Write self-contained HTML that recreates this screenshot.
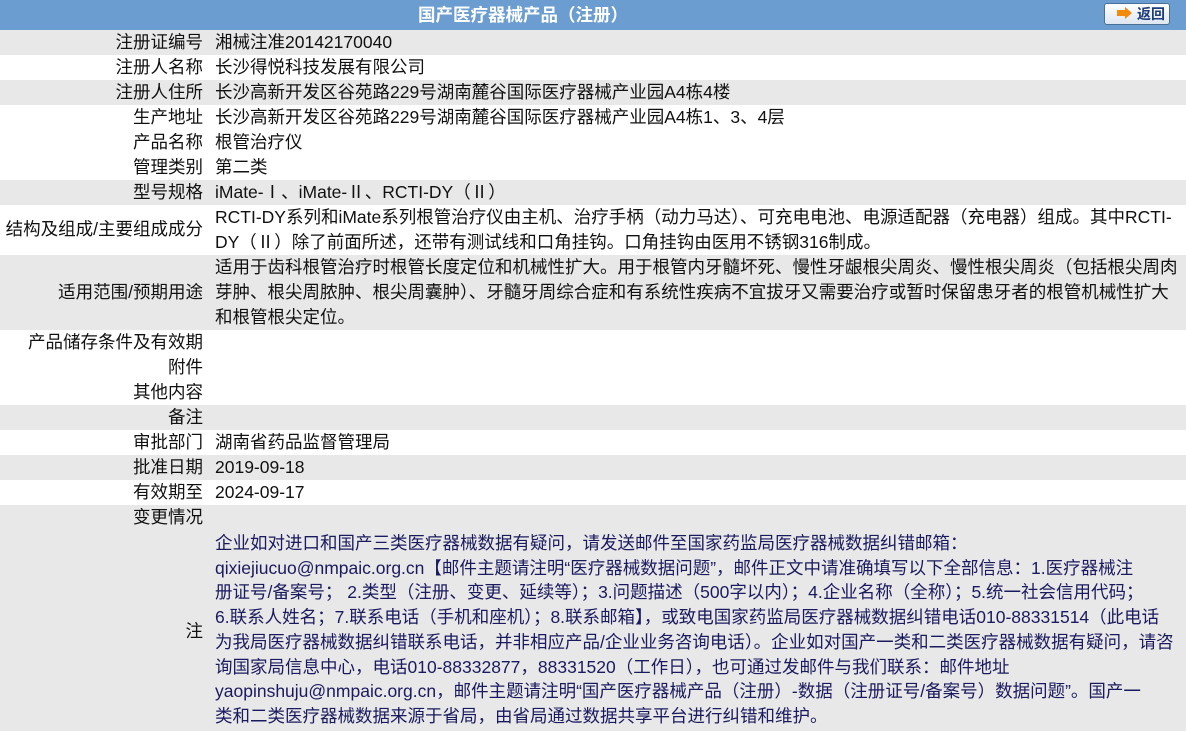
<!DOCTYPE html>
<html><head><meta charset="utf-8"><style>
*{margin:0;padding:0;box-sizing:border-box}
body{width:1186px;height:731px;overflow:hidden;background:#fff;font-family:"Liberation Sans","Noto Sans CJK SC",sans-serif;font-size:17.5px;color:#111}
.hd{position:absolute;left:0;top:0;width:1186px;height:30px;background:#6b9dd0;color:#fff;font-weight:bold;text-align:center;line-height:30px;font-size:17.5px}
.hd span{position:absolute;left:0;width:1046px;text-align:center}
.btn{position:absolute;left:1104px;top:3px;width:66px;height:22px;border:1px solid #4a6f98;border-radius:3px;background:linear-gradient(#fff,#dde6f0);font-size:14px;color:#1d3d7a;line-height:20px;font-weight:bold}
.btn i{position:absolute;left:12px;top:6px;width:8px;height:6px;background:#f28a10}
.btn b{position:absolute;left:20px;top:3px;border-left:7px solid #f28a10;border-top:6px solid transparent;border-bottom:6px solid transparent}
.btn em{position:absolute;left:32px;top:0;font-style:normal}
.r{position:absolute;left:0;width:1186px}
.g{background:#e8e8e8}
.l{position:absolute;right:983px;white-space:nowrap;line-height:25px}
.v{position:absolute;left:215px;white-space:nowrap;line-height:25px}
.n{color:#1a1a5e;line-height:24.7px}
</style></head><body>
<div class="hd"><span>国产医疗器械产品（注册）</span><div class="btn"><i></i><b></b><em>返回</em></div></div>

<div class="r g" style="top:30px;height:25px"><div class="l" style="top:0">注册证编号</div><div class="v" style="top:0">湘械注准20142170040</div></div>
<div class="r" style="top:55px;height:25px"><div class="l">注册人名称</div><div class="v">长沙得悦科技发展有限公司</div></div>
<div class="r g" style="top:80px;height:25px"><div class="l">注册人住所</div><div class="v">长沙高新开发区谷苑路229号湖南麓谷国际医疗器械产业园A4栋4楼</div></div>
<div class="r" style="top:105px;height:25px"><div class="l">生产地址</div><div class="v">长沙高新开发区谷苑路229号湖南麓谷国际医疗器械产业园A4栋1、3、4层</div></div>
<div class="r" style="top:130px;height:25px"><div class="l">产品名称</div><div class="v">根管治疗仪</div></div>
<div class="r" style="top:155px;height:25px"><div class="l">管理类别</div><div class="v">第二类</div></div>
<div class="r g" style="top:180px;height:25px"><div class="l">型号规格</div><div class="v">iMate-Ⅰ、iMate-Ⅱ、RCTI-DY（Ⅱ）</div></div>
<div class="r" style="top:205px;height:50px"><div class="l" style="top:12px">结构及组成/主要组成成分</div><div class="v">RCTI-DY系列和iMate系列根管治疗仪由主机、治疗手柄（动力马达）、可充电电池、电源适配器（充电器）组成。其中RCTI-<br>DY（Ⅱ）除了前面所述，还带有测试线和口角挂钩。口角挂钩由医用不锈钢316制成。</div></div>
<div class="r g" style="top:255px;height:75px"><div class="l" style="top:25px">适用范围/预期用途</div><div class="v">适用于齿科根管治疗时根管长度定位和机械性扩大。用于根管内牙髓坏死、慢性牙龈根尖周炎、慢性根尖周炎（包括根尖周肉<br>芽肿、根尖周脓肿、根尖周囊肿）、牙髓牙周综合症和有系统性疾病不宜拔牙又需要治疗或暂时保留患牙者的根管机械性扩大<br>和根管根尖定位。</div></div>
<div class="r" style="top:330px;height:25px"><div class="l">产品储存条件及有效期</div></div>
<div class="r" style="top:355px;height:25px"><div class="l">附件</div></div>
<div class="r" style="top:380px;height:25px"><div class="l">其他内容</div></div>
<div class="r g" style="top:405px;height:25px"><div class="l">备注</div></div>
<div class="r" style="top:430px;height:25px"><div class="l">审批部门</div><div class="v">湖南省药品监督管理局</div></div>
<div class="r g" style="top:455px;height:25px"><div class="l">批准日期</div><div class="v">2019-09-18</div></div>
<div class="r" style="top:480px;height:25px"><div class="l">有效期至</div><div class="v">2024-09-17</div></div>
<div class="r g" style="top:505px;height:226px"><div class="l" style="top:0">变更情况</div><div class="l" style="top:114px">注</div>
<div class="v n" style="top:26px">企业如对进口和国产三类医疗器械数据有疑问，请发送邮件至国家药监局医疗器械数据纠错邮箱：<br>qixiejiucuo@nmpaic.org.cn【邮件主题请注明“医疗器械数据问题”，邮件正文中请准确填写以下全部信息：1.医疗器械注<br>册证号/备案号； 2.类型（注册、变更、延续等）；3.问题描述（500字以内）；4.企业名称（全称）；5.统一社会信用代码；<br>6.联系人姓名；7.联系电话（手机和座机）；8.联系邮箱】，或致电国家药监局医疗器械数据纠错电话010-88331514（此电话<br>为我局医疗器械数据纠错联系电话，并非相应产品/企业业务咨询电话）。企业如对国产一类和二类医疗器械数据有疑问，请咨<br>询国家局信息中心，电话010-88332877，88331520（工作日），也可通过发邮件与我们联系：邮件地址<br>yaopinshuju@nmpaic.org.cn，邮件主题请注明“国产医疗器械产品（注册）-数据（注册证号/备案号）数据问题”。国产一<br>类和二类医疗器械数据来源于省局，由省局通过数据共享平台进行纠错和维护。</div></div>
</body></html>
